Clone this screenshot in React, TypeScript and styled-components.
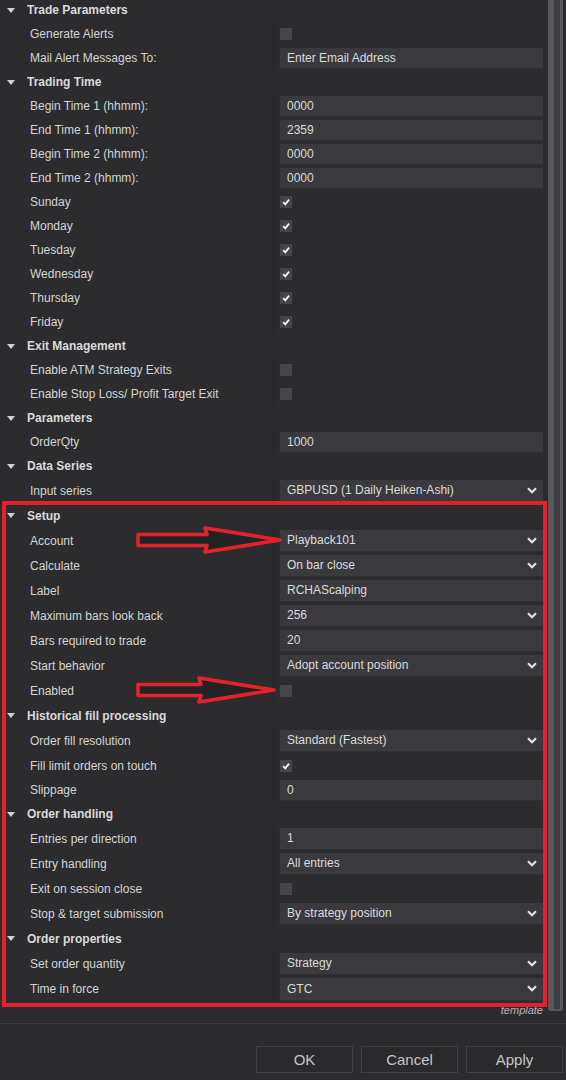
import React from "react";
import styled, { createGlobalStyle } from "styled-components";

const GlobalStyle = createGlobalStyle`
  html, body { margin: 0; padding: 0; background: #2c2c2f; }
  body { font-family: "Liberation Sans", Arial, sans-serif; }
  * { box-sizing: border-box; }
`;

type Prop =
  | { kind: "check"; label: string; checked: boolean; h?: number }
  | { kind: "text"; label: string; value: string; h?: number }
  | { kind: "combo"; label: string; value: string; h?: number };

type Section = { title: string; rowH: number; headH?: number; props: Prop[] };

const sections: Section[] = [
  {
    title: "Trade Parameters",
    rowH: 24,
    props: [
      { kind: "check", label: "Generate Alerts", checked: false },
      { kind: "text", label: "Mail Alert Messages To:", value: "Enter Email Address" },
    ],
  },
  {
    title: "Trading Time",
    rowH: 24,
    props: [
      { kind: "text", label: "Begin Time 1 (hhmm):", value: "0000" },
      { kind: "text", label: "End Time 1 (hhmm):", value: "2359" },
      { kind: "text", label: "Begin Time 2 (hhmm):", value: "0000" },
      { kind: "text", label: "End Time 2 (hhmm):", value: "0000" },
      { kind: "check", label: "Sunday", checked: true },
      { kind: "check", label: "Monday", checked: true },
      { kind: "check", label: "Tuesday", checked: true },
      { kind: "check", label: "Wednesday", checked: true },
      { kind: "check", label: "Thursday", checked: true },
      { kind: "check", label: "Friday", checked: true },
    ],
  },
  {
    title: "Exit Management",
    rowH: 24,
    props: [
      { kind: "check", label: "Enable ATM Strategy Exits", checked: false },
      { kind: "check", label: "Enable Stop Loss/ Profit Target Exit", checked: false },
    ],
  },
  {
    title: "Parameters",
    rowH: 24,
    props: [{ kind: "text", label: "OrderQty", value: "1000" }],
  },
  {
    title: "Data Series",
    rowH: 25,
    headH: 24,
    props: [{ kind: "combo", label: "Input series", value: "GBPUSD (1 Daily Heiken-Ashi)" }],
  },
  {
    title: "Setup",
    rowH: 25,
    props: [
      { kind: "combo", label: "Account", value: "Playback101" },
      { kind: "combo", label: "Calculate", value: "On bar close" },
      { kind: "text", label: "Label", value: "RCHAScalping" },
      { kind: "combo", label: "Maximum bars look back", value: "256" },
      { kind: "text", label: "Bars required to trade", value: "20" },
      { kind: "combo", label: "Start behavior", value: "Adopt account position" },
      { kind: "check", label: "Enabled", checked: false },
    ],
  },
  {
    title: "Historical fill processing",
    rowH: 25,
    props: [
      { kind: "combo", label: "Order fill resolution", value: "Standard (Fastest)" },
      { kind: "check", label: "Fill limit orders on touch", checked: true },
      { kind: "text", label: "Slippage", value: "0", h: 24 },
    ],
  },
  {
    title: "Order handling",
    rowH: 25,
    headH: 24,
    props: [
      { kind: "text", label: "Entries per direction", value: "1" },
      { kind: "combo", label: "Entry handling", value: "All entries" },
      { kind: "check", label: "Exit on session close", checked: false },
      { kind: "combo", label: "Stop & target submission", value: "By strategy position" },
    ],
  },
  {
    title: "Order properties",
    rowH: 25,
    props: [
      { kind: "combo", label: "Set order quantity", value: "Strategy" },
      { kind: "combo", label: "Time in force", value: "GTC", h: 26 },
    ],
  },
];

const Window = styled.div`
  position: relative;
  width: 566px;
  height: 1080px;
  background: #2c2c2f;
  display: flex;
  flex-direction: column;
  overflow: hidden;
  color: #d4d4d4;
  font-size: 12px;
`;

const Body = styled.div`
  display: flex;
  height: 1019px;
`;

const Viewport = styled.div`
  flex: 0 0 548px;
  overflow: hidden;
  display: flex;
  flex-direction: column;
`;

const List = styled.div`
  margin-top: -2px;
  display: flex;
  flex-direction: column;
`;

const HeaderRow = styled.div<{ $h: number }>`
  height: ${(p) => p.$h}px;
  display: flex;
  align-items: center;
  gap: 12px;
  padding-left: 7px;
  font-weight: bold;
  color: #dadada;
`;

const PropRow = styled.div<{ $h: number }>`
  height: ${(p) => p.$h}px;
  display: grid;
  grid-template-columns: 273px 1px 1fr;
  align-items: stretch;
`;

const LabelCell = styled.div`
  display: flex;
  align-items: center;
  padding-left: 30px;
  color: #d4d4d4;
  white-space: nowrap;
`;

const Divider = styled.div`
  background: #242427;
`;

const ValueCell = styled.div`
  display: flex;
  align-items: center;
  padding: 0 5px 0 6px;
`;

const Field = styled.div`
  flex: 1;
  height: calc(100% - 3px);
  background: #3a3a3e;
  border-bottom: 1px solid #303033;
  display: flex;
  align-items: center;
  justify-content: space-between;
  padding: 0 6px 0 7px;
  color: #dadada;
  white-space: nowrap;
`;

const Box = styled.div`
  width: 12px;
  height: 12px;
  background: #45454a;
  display: flex;
  align-items: center;
  justify-content: center;
`;

const Caption = styled.div`
  height: 16px;
  display: flex;
  align-items: center;
  justify-content: flex-end;
  padding-right: 5px;
  font-style: italic;
  font-size: 11px;
  color: #b4b4b4;
`;

const ScrollTrack = styled.div`
  flex: 0 0 18px;
  padding-right: 3px;
  display: flex;
`;

const Thumb = styled.div`
  width: 100%;
  height: 1011px;
  background: #3d3d41;
  border-left: 6px solid #58585c;
  border-right: 3px solid #58585c;
  border-bottom: 2px solid #58585c;
  border-radius: 0 0 3px 3px;
`;

const Separator = styled.div`
  height: 1px;
  margin-top: 4px;
  background: #3a3a3d;
`;

const ButtonBar = styled.div`
  display: flex;
  justify-content: flex-end;
  gap: 8px;
  padding: 22px 3px 0 0;
`;

const Button = styled.button`
  width: 97px;
  height: 27px;
  background: #2a2a2d;
  border: 1px solid #404044;
  color: #c6c6c6;
  font-family: "Liberation Sans", Arial, sans-serif;
  font-size: 15px;
  padding: 0;
`;

const RedFrame = styled.div`
  position: absolute;
  left: 2px;
  top: 501px;
  width: 545px;
  height: 506px;
  border: 4px solid #e3202b;
  pointer-events: none;
`;

const ArrowSvg = styled.svg<{ $top: number }>`
  position: absolute;
  left: 134px;
  top: ${(p) => p.$top}px;
  pointer-events: none;
`;

const Triangle = () => (
  <svg width="8" height="5" viewBox="0 0 8 5">
    <polygon points="0,0 8,0 4,5" fill="#d0d0d0" />
  </svg>
);

const Chevron = () => (
  <svg width="10" height="7" viewBox="0 0 10 7">
    <polyline points="1,1.2 5,5.2 9,1.2" fill="none" stroke="#e2e2e2" strokeWidth="2.2" />
  </svg>
);

const Check = () => (
  <svg width="10" height="10" viewBox="0 0 10 10">
    <path d="M2.2 5.2 L4.3 7.4 L8 2.6" fill="none" stroke="#f0f0f0" strokeWidth="1.9" />
  </svg>
);

const Arrow = ({ top, tip }: { top: number; tip: number }) => {
  const w = tip - 134 + 4;
  const hx = tip - 134 - 74;
  return (
    <ArrowSvg $top={top} width={w} height={30} viewBox={`0 0 ${w} 30`}>
      <polygon
        points={`4,9.5 ${hx + 2},9.5 ${hx},3 ${w - 3},15 ${hx},27 ${hx + 2},20.5 4,20.5`}
        fill="#232326"
        stroke="#e3222c"
        strokeWidth="3.6"
        strokeLinejoin="round"
      />
    </ArrowSvg>
  );
};

const PropertyRow = ({ p, h }: { p: Prop; h: number }) => (
  <PropRow $h={p.h ?? h}>
    <LabelCell>{p.label}</LabelCell>
    <Divider />
    <ValueCell>
      {p.kind === "check" ? (
        <Box>{p.checked && <Check />}</Box>
      ) : (
        <Field>
          <span>{p.value}</span>
          {p.kind === "combo" && <Chevron />}
        </Field>
      )}
    </ValueCell>
  </PropRow>
);

export default function App() {
  return (
    <>
      <GlobalStyle />
      <Window>
        <Body>
          <Viewport>
            <List>
              {sections.map((s) => (
                <React.Fragment key={s.title}>
                  <HeaderRow $h={s.headH ?? s.rowH}>
                    <Triangle />
                    <span>{s.title}</span>
                  </HeaderRow>
                  {s.props.map((p) => (
                    <PropertyRow key={p.label} p={p} h={s.rowH} />
                  ))}
                </React.Fragment>
              ))}
            </List>
            <Caption>template</Caption>
          </Viewport>
          <ScrollTrack>
            <Thumb />
          </ScrollTrack>
        </Body>
        <Separator />
        <ButtonBar>
          <Button>OK</Button>
          <Button>Cancel</Button>
          <Button>Apply</Button>
        </ButtonBar>
        <RedFrame />
        <Arrow top={525} tip={279} />
        <Arrow top={675} tip={273} />
      </Window>
    </>
  );
}
